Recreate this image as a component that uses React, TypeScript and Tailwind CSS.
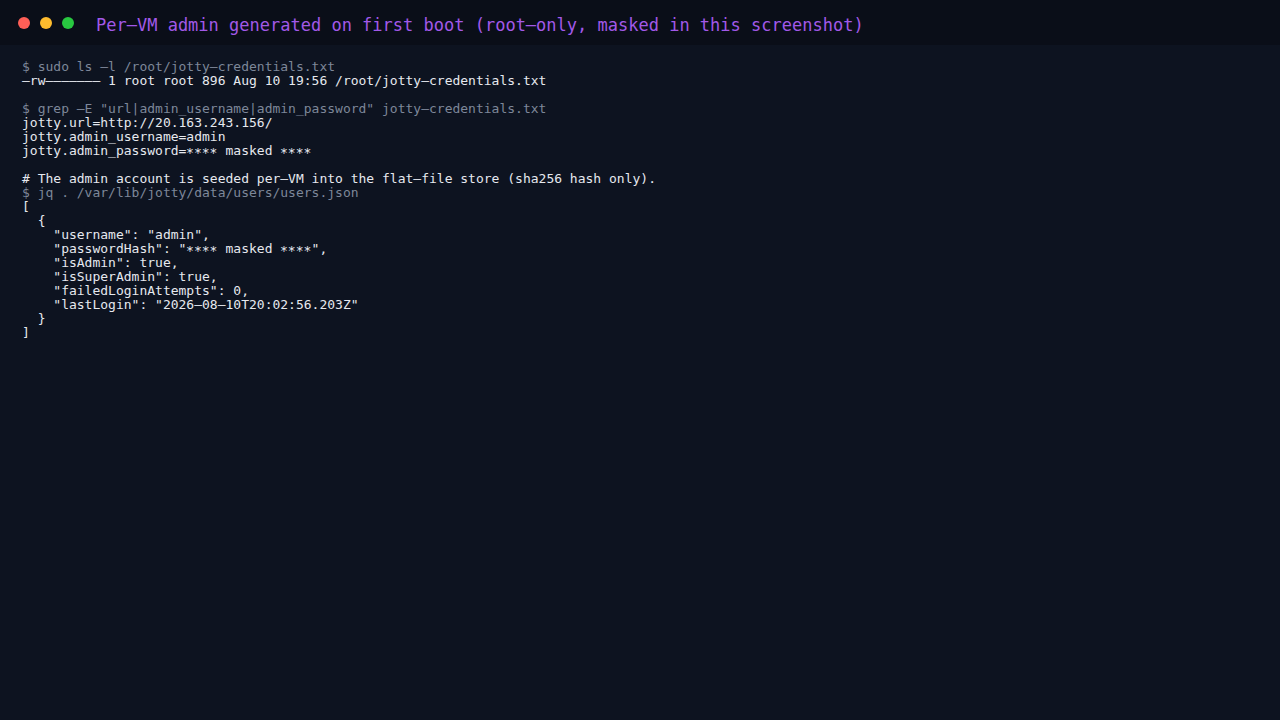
const mono = { fontFamily: '"DejaVu Sans Mono", "Liberation Mono", monospace' };

// the capture shows wide dashes and star asterisks, so swap them in
const t = (s: string) => s.replace(/-/g, "\u2013").replace(/\*/g, "\u2217");

const LINES: { text: string; kind: "cmd" | "out" | "gap" }[] = [
  { text: "$ sudo ls -l /root/jotty-credentials.txt", kind: "cmd" },
  { text: "-rw------- 1 root root 896 Aug 10 19:56 /root/jotty-credentials.txt", kind: "out" },
  { text: "", kind: "gap" },
  { text: '$ grep -E "url|admin_username|admin_password" jotty-credentials.txt', kind: "cmd" },
  { text: "jotty.url=http://20.163.243.156/", kind: "out" },
  { text: "jotty.admin_username=admin", kind: "out" },
  { text: "jotty.admin_password=**** masked ****", kind: "out" },
  { text: "", kind: "gap" },
  { text: "# The admin account is seeded per-VM into the flat-file store (sha256 hash only).", kind: "out" },
  { text: "$ jq . /var/lib/jotty/data/users/users.json", kind: "cmd" },
  { text: "[", kind: "out" },
  { text: "  {", kind: "out" },
  { text: '    "username": "admin",', kind: "out" },
  { text: '    "passwordHash": "**** masked ****",', kind: "out" },
  { text: '    "isAdmin": true,', kind: "out" },
  { text: '    "isSuperAdmin": true,', kind: "out" },
  { text: '    "failedLoginAttempts": 0,', kind: "out" },
  { text: '    "lastLogin": "2026-08-10T20:02:56.203Z"', kind: "out" },
  { text: "  }", kind: "out" },
  { text: "]", kind: "out" },
];

export default function App() {
  return (
    <div className="w-[1280px] h-[720px] bg-[#0d1320] flex flex-col" style={mono}>
      <div className="h-[45px] shrink-0 bg-[#0a0e18] flex items-center pl-[18px]">
        <div className="flex gap-[10px]">
          <span className="w-[12px] h-[12px] rounded-full bg-[#ff5f57]" />
          <span className="w-[12px] h-[12px] rounded-full bg-[#febc2e]" />
          <span className="w-[12px] h-[12px] rounded-full bg-[#28c840]" />
        </div>
        <div className="ml-[22px] pt-[7px] text-[17px] text-[#a259e8]">
          {t("Per-VM admin generated on first boot (root-only, masked in this screenshot)")}
        </div>
      </div>
      <div className="pl-[22px] pt-[15px] text-[13px] leading-[14px] whitespace-pre">
        {LINES.map((l, i) =>
          l.kind === "gap" ? (
            <div key={i} className="h-[14px]" />
          ) : (
            <div key={i} className={l.kind === "cmd" ? "text-[#7d8799]" : "text-[#e6e9ef]"}>
              {t(l.text)}
            </div>
          )
        )}
      </div>
    </div>
  );
}
